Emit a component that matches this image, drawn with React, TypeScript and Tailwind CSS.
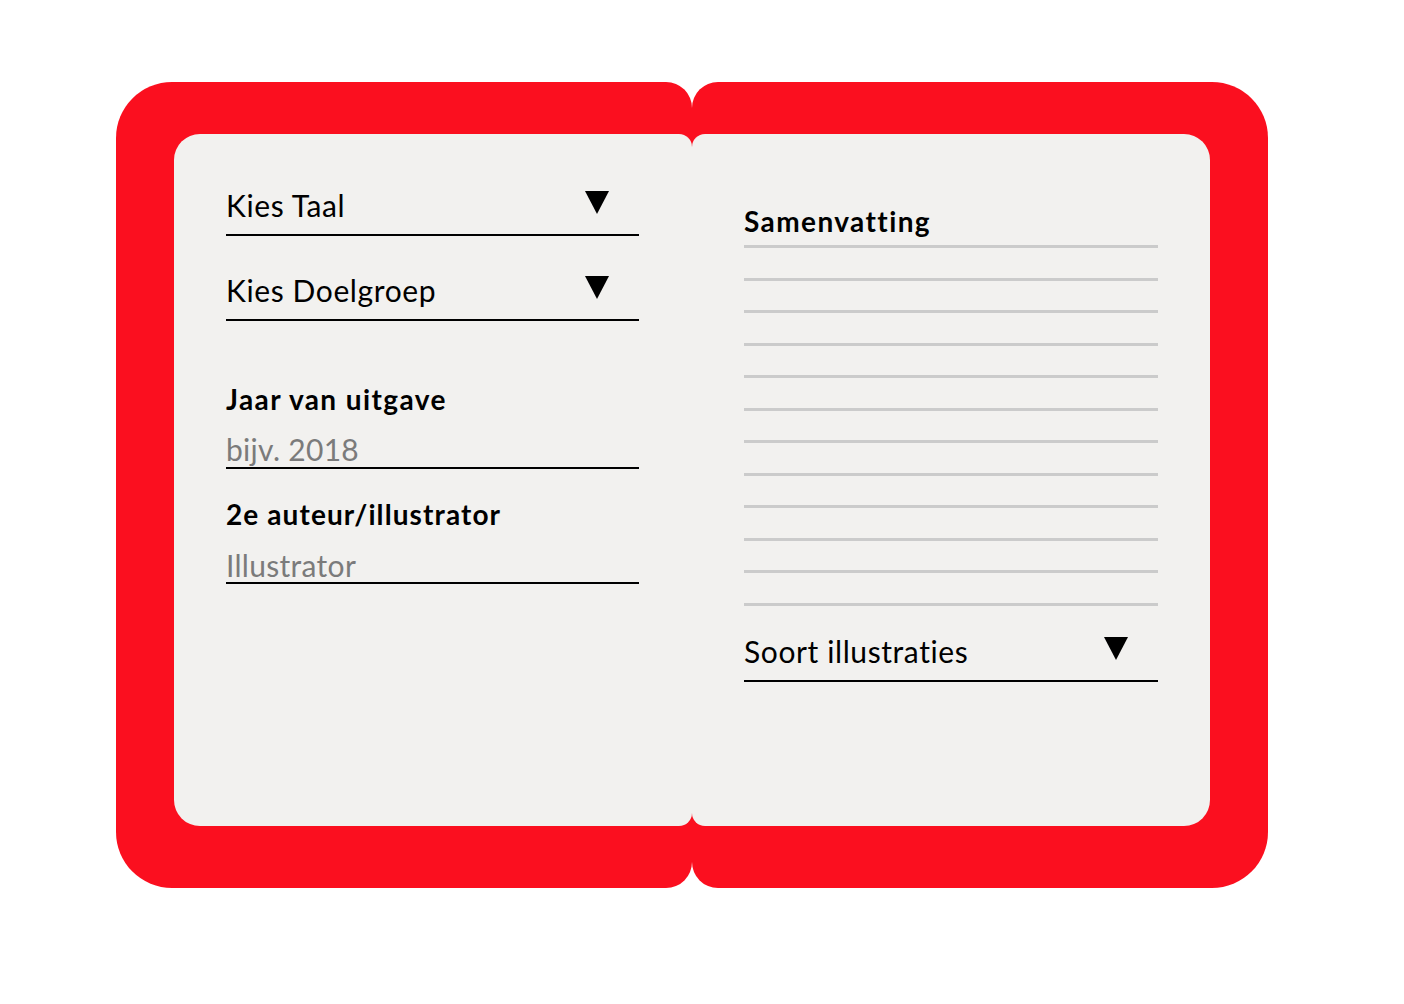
import React from "react";

const font = { fontFamily: "Lato, 'Noto Sans', sans-serif" };

function Tri() {
  return (
    <svg width="24" height="23" viewBox="0 0 24 23" className="block">
      <polygon points="0,0 24,0 12,23" fill="#000" />
    </svg>
  );
}

function Select({ label, h, mt }: { label: string; h: string; mt: string }) {
  return (
    <div className={`flex justify-between items-start border-b-2 border-black ${h} ${mt}`}>
      <span className="text-[30px] leading-[30px] tracking-[0.6px] text-black">{label}</span>
      <span className="mt-[1px] mr-[30px]">
        <Tri />
      </span>
    </div>
  );
}

export default function App() {
  const lines = Array.from({ length: 12 });
  return (
    <div className="w-[1404px] h-[1004px] bg-white" style={font}>
      <div className="flex pl-[116px] pt-[82px]">
        {/* left cover */}
        <div className="w-[576px] h-[806px] bg-[#fb0f1f] rounded-l-[56px] rounded-r-[26px] pt-[52px] pl-[58px]">
          <div className="w-[518px] h-[692px] bg-[#f2f1ef] rounded-l-[26px] rounded-r-[13px] pl-[52px] pr-[53px] pt-[56px]">
            <Select label="Kies Taal" h="h-[46px]" mt="mt-0" />
            <Select label="Kies Doelgroep" h="h-[46px]" mt="mt-[39px]" />
            <div className="mt-[64px] text-[28px] leading-[28px] font-bold tracking-[1.4px] text-black">Jaar van uitgave</div>
            <div className="mt-[19px] h-[37px] pt-[2px] border-b-2 border-black text-[30px] leading-[30px] tracking-[0.3px] text-[#7b7b7b]">bijv. 2018</div>
            <div className="mt-[31px] text-[28px] leading-[28px] font-bold tracking-[1.1px] text-black">2e auteur/illustrator</div>
            <div className="mt-[19px] h-[37px] pt-[3px] border-b-2 border-black text-[30px] leading-[30px] tracking-[0.3px] text-[#7b7b7b]">Illustrator</div>
          </div>
        </div>
        {/* right cover */}
        <div className="w-[576px] h-[806px] bg-[#fb0f1f] rounded-r-[56px] rounded-l-[26px] pt-[52px] pr-[58px]">
          <div className="w-[518px] h-[692px] bg-[#f2f1ef] rounded-r-[26px] rounded-l-[13px] pl-[52px] pr-[52px] pt-[73px]">
            <div className="text-[28px] leading-[28px] font-bold tracking-[1.4px] text-black">Samenvatting</div>
            <div className="mt-[10px] flex flex-col gap-[29.5px]">
              {lines.map((_, i) => (
                <div key={i} className="h-[3px] bg-[#cbcbcb]" />
              ))}
            </div>
            <Select label="Soort illustraties" h="h-[46px]" mt="mt-[30px]" />
          </div>
        </div>
      </div>
    </div>
  );
}
